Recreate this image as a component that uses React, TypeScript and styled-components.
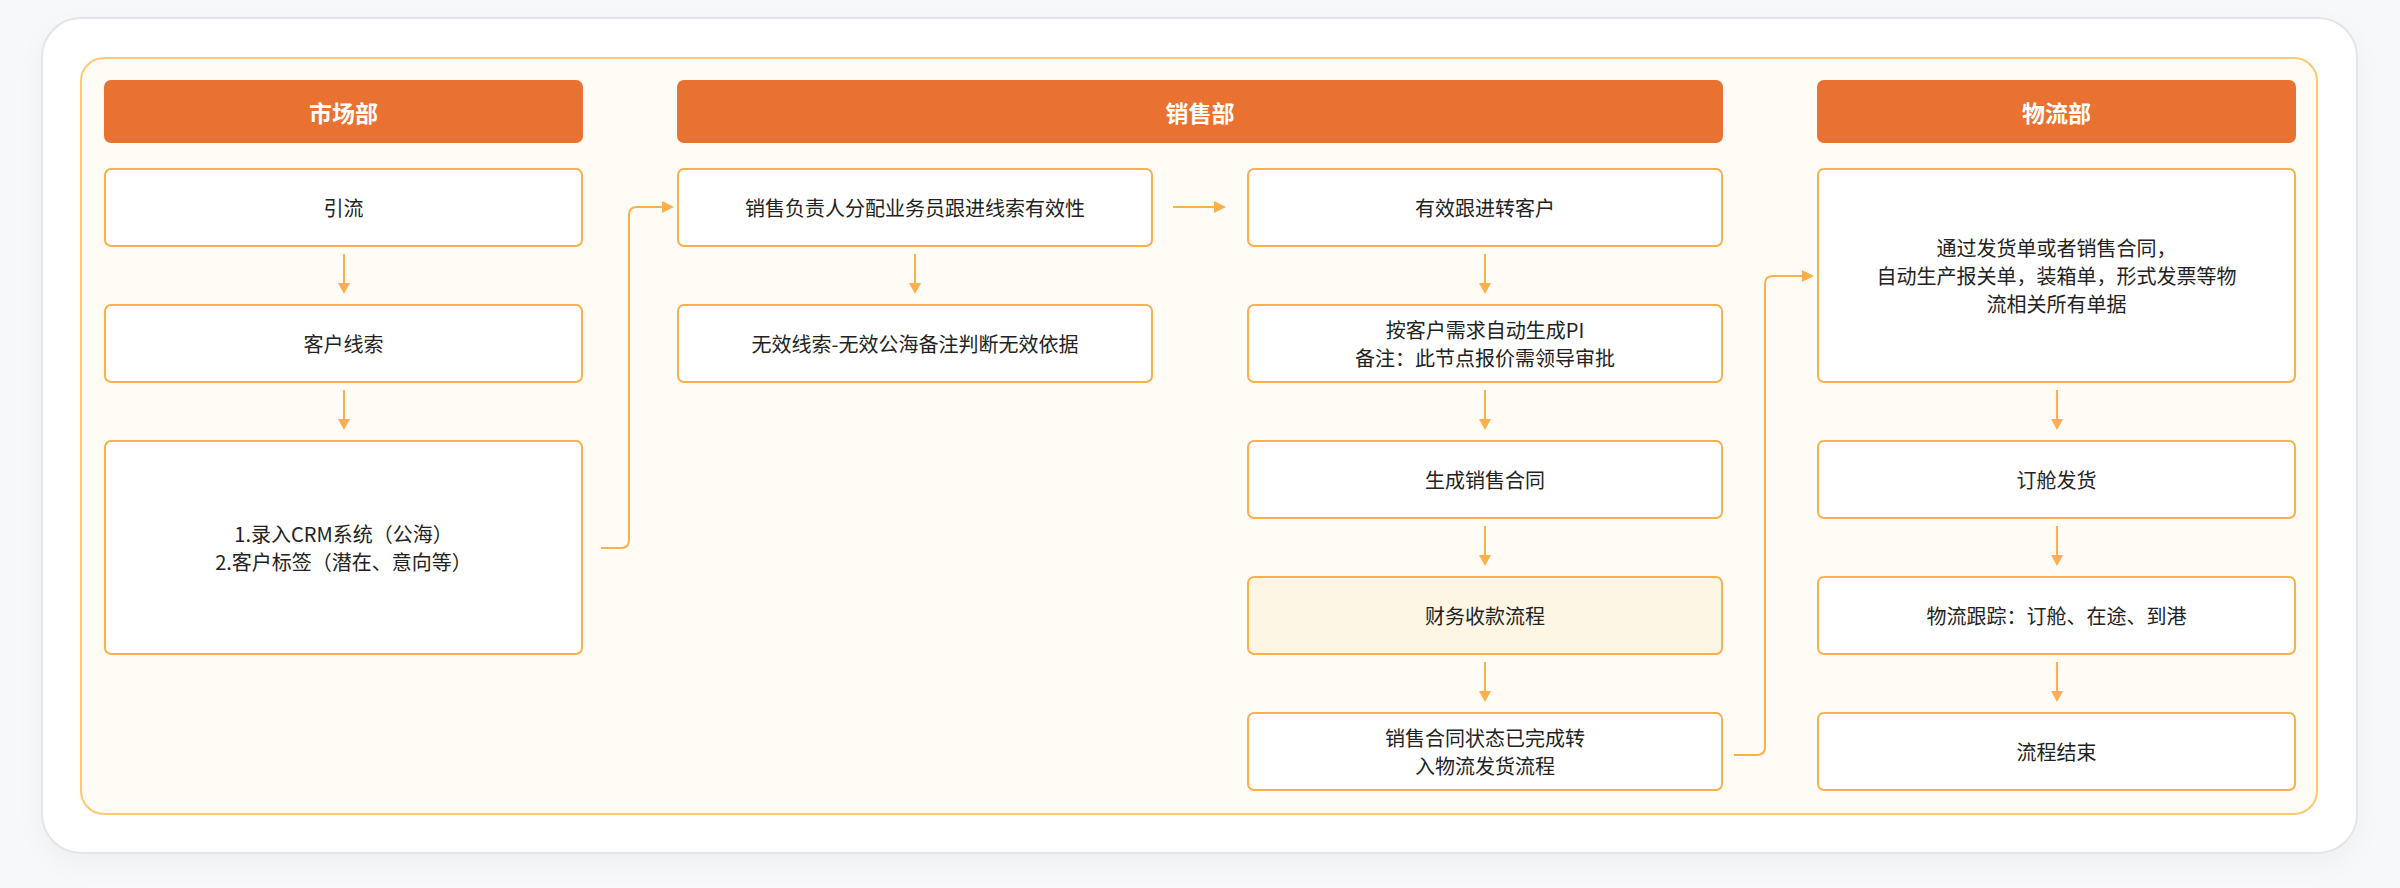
import React from 'react'
import styled, { createGlobalStyle } from 'styled-components'

const GlobalStyle = createGlobalStyle`
  body {
    margin: 0;
    background: #f7f8fa;
    font-family: "Noto Sans CJK SC", "Noto Sans", sans-serif;
  }
`

const ORANGE = '#fbb04c'

const Page = styled.div`
  width: 2400px;
  height: 888px;
  padding: 17px 42px 0 41px;
  box-sizing: border-box;
  background: #f7f8fa;
`

const Card = styled.div`
  height: 837px;
  background: #fff;
  border: 2px solid #e3e5ea;
  border-radius: 40px;
  box-shadow: 0 10px 30px rgba(0, 0, 0, 0.04);
  padding: 38px 38px 0 37px;
  box-sizing: border-box;
`

const Panel = styled.div`
  height: 758px;
  background: #fffcf5;
  border: 2px solid #fdc872;
  border-radius: 24px;
  padding: 21px 21px 0 22px;
  box-sizing: border-box;
`

const Columns = styled.div`
  display: grid;
  grid-template-columns: 479px 476px 476px 479px;
  column-gap: 93px;
  column-gap: 94px;
`

const Headers = styled(Columns)`
  margin-bottom: 25px;
`

const Header = styled.div<{ $span?: number }>`
  grid-column: span ${(p) => p.$span || 1};
  height: 63px;
  background: #e97232;
  border-radius: 7px;
  color: #fff;
  font-size: 23px;
  font-weight: 700;
  display: flex;
  align-items: center;
  justify-content: center;
`

const Body = styled(Columns)`
  position: relative;
  grid-template-rows: repeat(5, 79px);
  row-gap: 57px;
`

const Box = styled.div<{ $col: number; $row: number; $rows?: number; $fill?: boolean }>`
  position: relative;
  grid-column: ${(p) => p.$col};
  grid-row: ${(p) => p.$row} / span ${(p) => p.$rows || 1};
  background: ${(p) => (p.$fill ? '#fef6e4' : '#fff')};
  border: 2px solid ${ORANGE};
  border-radius: 7px;
  display: flex;
  align-items: center;
  justify-content: center;
  text-align: center;
  font-size: 20px;
  line-height: 28px;
  color: #222;
`

const DownArrow = styled.svg`
  position: absolute;
  left: 50%;
  top: 100%;
  margin-left: -6px;
  margin-top: 9px;
  width: 12px;
  height: 40px;
  overflow: visible;
`

const Overlay = styled.svg`
  position: absolute;
  left: 0;
  top: 0;
  width: 2191px;
  height: 622px;
  pointer-events: none;
  overflow: visible;
`

const Down = () => (
  <DownArrow viewBox="0 0 12 40">
    <line x1="6" y1="0" x2="6" y2="30" stroke={ORANGE} strokeWidth="2" />
    <path d="M0 29 L12 29 L6 40 Z" fill={ORANGE} />
  </DownArrow>
)

type Node = { col: number; row: number; rows?: number; fill?: boolean; arrow?: boolean; text: string[] }

const nodes: Node[] = [
  { col: 1, row: 1, arrow: true, text: ['引流'] },
  { col: 1, row: 2, arrow: true, text: ['客户线索'] },
  { col: 1, row: 3, rows: 2, text: ['1.录入CRM系统（公海）', '2.客户标签（潜在、意向等）'] },
  { col: 2, row: 1, arrow: true, text: ['销售负责人分配业务员跟进线索有效性'] },
  { col: 2, row: 2, text: ['无效线索-无效公海备注判断无效依据'] },
  { col: 3, row: 1, arrow: true, text: ['有效跟进转客户'] },
  { col: 3, row: 2, arrow: true, text: ['按客户需求自动生成PI', '备注：此节点报价需领导审批'] },
  { col: 3, row: 3, arrow: true, text: ['生成销售合同'] },
  { col: 3, row: 4, arrow: true, fill: true, text: ['财务收款流程'] },
  { col: 3, row: 5, text: ['销售合同状态已完成转', '入物流发货流程'] },
  { col: 4, row: 1, rows: 2, arrow: true, text: ['通过发货单或者销售合同，', '自动生产报关单，装箱单，形式发票等物', '流相关所有单据'] },
  { col: 4, row: 3, arrow: true, text: ['订舱发货'] },
  { col: 4, row: 4, arrow: true, text: ['物流跟踪：订舱、在途、到港'] },
  { col: 4, row: 5, text: ['流程结束'] },
]

export default function App() {
  return (
    <Page>
      <GlobalStyle />
      <Card>
        <Panel>
          <Headers>
            <Header>市场部</Header>
            <Header $span={2}>销售部</Header>
            <Header>物流部</Header>
          </Headers>
          <Body>
            {nodes.map((n, i) => (
              <Box key={i} $col={n.col} $row={n.row} $rows={n.rows} $fill={n.fill}>
                <div>
                  {n.text.map((t, j) => (
                    <div key={j}>{t}</div>
                  ))}
                </div>
                {n.arrow && <Down />}
              </Box>
            ))}
            <Overlay viewBox="0 0 2191 622">
              <g fill="none" stroke={ORANGE} strokeWidth="2">
                <path d="M497 380 H517 Q525 380 525 372 V47 Q525 39 533 39 H560" />
                <path d="M1069 39 H1112" />
                <path d="M1630 587 H1653 Q1661 587 1661 579 V116 Q1661 108 1669 108 H1700" />
              </g>
              <g fill={ORANGE}>
                <path d="M558 33 L570 39 L558 45 Z" />
                <path d="M1110 33 L1122 39 L1110 45 Z" />
                <path d="M1698 102 L1710 108 L1698 114 Z" />
              </g>
            </Overlay>
          </Body>
        </Panel>
      </Card>
    </Page>
  )
}
